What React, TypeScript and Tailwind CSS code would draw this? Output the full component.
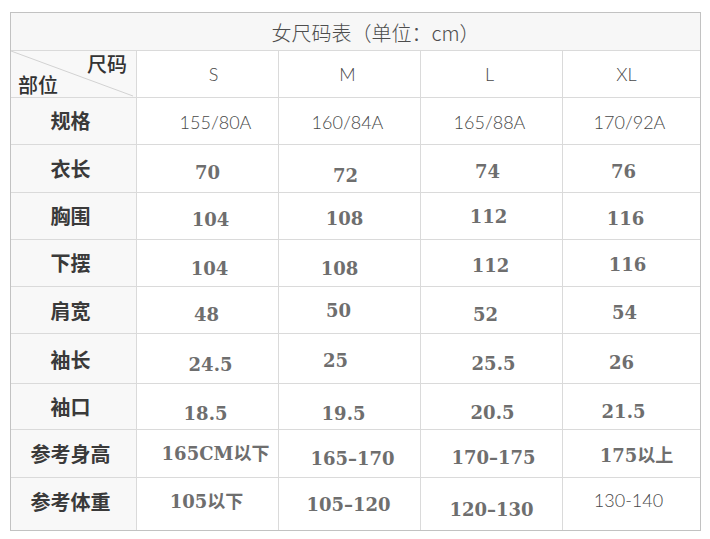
type Cell = { text: string; thin?: boolean; nudge: string };
type Row = { label: string; nudge: string; cells: Cell[] };

const sizes: Cell[] = [
  { text: "S", nudge: "translate-x-[6px]" },
  { text: "M", nudge: "-translate-x-[2px]" },
  { text: "L", nudge: "-translate-x-[2px]" },
  { text: "XL", nudge: "-translate-x-[5px]" },
];

const rows: Row[] = [
  {
    label: "规格",
    nudge: "-translate-x-[3px]",
    cells: [
      { text: "155/80A", thin: true, nudge: "translate-x-[8px] translate-y-[1px]" },
      { text: "160/84A", thin: true, nudge: "-translate-x-[2px] translate-y-[1px]" },
      { text: "165/88A", thin: true, nudge: "-translate-x-[2px] translate-y-[1px]" },
      { text: "170/92A", thin: true, nudge: "-translate-x-[2px] translate-y-[1px]" },
    ],
  },
  {
    label: "衣长",
    nudge: "-translate-x-[3px]",
    cells: [
      { text: "70", nudge: "translate-y-[4px]" },
      { text: "72", nudge: "-translate-x-[4px] translate-y-[7px]" },
      { text: "74", nudge: "-translate-x-[4px] translate-y-[3px]" },
      { text: "76", nudge: "-translate-x-[8px] translate-y-[3px]" },
    ],
  },
  {
    label: "胸围",
    nudge: "-translate-x-[3px]",
    cells: [
      { text: "104", nudge: "translate-x-[3px] translate-y-[4px]" },
      { text: "108", nudge: "-translate-x-[5px] translate-y-[3px]" },
      { text: "112", nudge: "-translate-x-[3px] translate-y-[1px]" },
      { text: "116", nudge: "-translate-x-[6px] translate-y-[3px]" },
    ],
  },
  {
    label: "下摆",
    nudge: "-translate-x-[3px]",
    cells: [
      { text: "104", nudge: "translate-x-[2px] translate-y-[6px]" },
      { text: "108", nudge: "-translate-x-[10px] translate-y-[6px]" },
      { text: "112", nudge: "-translate-x-[1px] translate-y-[3px]" },
      { text: "116", nudge: "-translate-x-[4px] translate-y-[2px]" },
    ],
  },
  {
    label: "肩宽",
    nudge: "-translate-x-[3px] translate-y-[1px]",
    cells: [
      { text: "48", nudge: "-translate-x-[1px] translate-y-[5px]" },
      { text: "50", nudge: "-translate-x-[11px] translate-y-[1px]" },
      { text: "52", nudge: "-translate-x-[6px] translate-y-[5px]" },
      { text: "54", nudge: "-translate-x-[7px] translate-y-[3px]" },
    ],
  },
  {
    label: "袖长",
    nudge: "-translate-x-[3px] translate-y-[1px]",
    cells: [
      { text: "24.5", nudge: "translate-x-[3px] translate-y-[6px]" },
      { text: "25", nudge: "-translate-x-[14px] translate-y-[2px]" },
      { text: "25.5", nudge: "translate-x-[2px] translate-y-[5px]" },
      { text: "26", nudge: "-translate-x-[10px] translate-y-[4px]" },
    ],
  },
  {
    label: "袖口",
    nudge: "-translate-x-[3px]",
    cells: [
      { text: "18.5", nudge: "-translate-x-[2px] translate-y-[7px]" },
      { text: "19.5", nudge: "-translate-x-[6px] translate-y-[7px]" },
      { text: "20.5", nudge: "translate-x-[1px] translate-y-[6px]" },
      { text: "21.5", nudge: "-translate-x-[8px] translate-y-[5px]" },
    ],
  },
  {
    label: "参考身高",
    nudge: "-translate-x-[3px]",
    cells: [
      { text: "165CM以下", nudge: "translate-x-[8px]" },
      { text: "165–170", nudge: "translate-x-[3px] translate-y-[5px]" },
      { text: "170–175", nudge: "translate-x-[2px] translate-y-[4px]" },
      { text: "175以上", nudge: "translate-x-[5px] translate-y-[2px]" },
    ],
  },
  {
    label: "参考体重",
    nudge: "-translate-x-[3px] -translate-y-[2px]",
    cells: [
      { text: "105以下", nudge: "-translate-x-[1px] -translate-y-[2px]" },
      { text: "105–120", nudge: "-translate-x-[1px] translate-y-[1px]" },
      { text: "120–130", nudge: "translate-y-[6px]" },
      { text: "130-140", thin: true, nudge: "-translate-x-[3px] -translate-y-[4px]" },
    ],
  },
];

const thinFont = "font-['Lato','Noto_Sans_CJK_SC',sans-serif] font-light text-[18px] text-[#484848]";
const boldFont =
  "font-['DejaVu_Serif','Noto_Sans_CJK_SC',serif] font-bold text-[18px] text-[#6e6e6e]";

export default function App() {
  return (
    <div className="min-h-[539px] w-[710px] bg-white pt-[12px] pl-[10px]">
      <div className="grid w-[691px] grid-cols-[125px_141px_141px_141px_137px] grid-rows-[37px_46px_46px_47px_46px_46px_46px_49px_45px_47px_52px] gap-px border border-[#c2c2c2] bg-[#dadada]">
        <div className="col-span-5 flex items-center justify-center bg-[#f7f7f7]">
          <span className="translate-x-[20px] translate-y-[1px] font-['Noto_Sans_CJK_SC',sans-serif] text-[20px] font-light leading-none text-[#4d4d4d]">
            女尺码表（单位：cm）
          </span>
        </div>

        <div className="relative flex flex-col justify-between bg-[#f8f8f8] font-['Noto_Sans_CJK_SC',sans-serif] text-[20px] font-medium leading-none text-[#333]">
          <svg className="absolute inset-0 h-full w-full" preserveAspectRatio="none" viewBox="0 0 125 46">
            <line x1="0" y1="0" x2="122" y2="45" stroke="#d2d2d2" strokeWidth="1" />
          </svg>
          <span className="relative self-end pt-[3px] pr-[9px]">尺码</span>
          <span className="relative self-start pb-[2px] pl-[7px]">部位</span>
        </div>
        {sizes.map((s) => (
          <div key={s.text} className="flex items-center justify-center bg-white">
            <span className={`${thinFont} leading-none ${s.nudge}`}>{s.text}</span>
          </div>
        ))}

        {rows.map((row) => (
          <div key={row.label} className="contents">
            <div className="flex items-center justify-center bg-[#f8f8f8]">
              <span
                className={`font-['Noto_Sans_CJK_SC',sans-serif] text-[20px] font-bold leading-none text-[#3a3a3a] ${row.nudge}`}
              >
                {row.label}
              </span>
            </div>
            {row.cells.map((c, i) => (
              <div key={i} className="flex items-center justify-center bg-white">
                <span className={`${c.thin ? thinFont : boldFont} whitespace-nowrap leading-none ${c.nudge}`}>
                  {c.text}
                </span>
              </div>
            ))}
          </div>
        ))}
      </div>
    </div>
  );
}
